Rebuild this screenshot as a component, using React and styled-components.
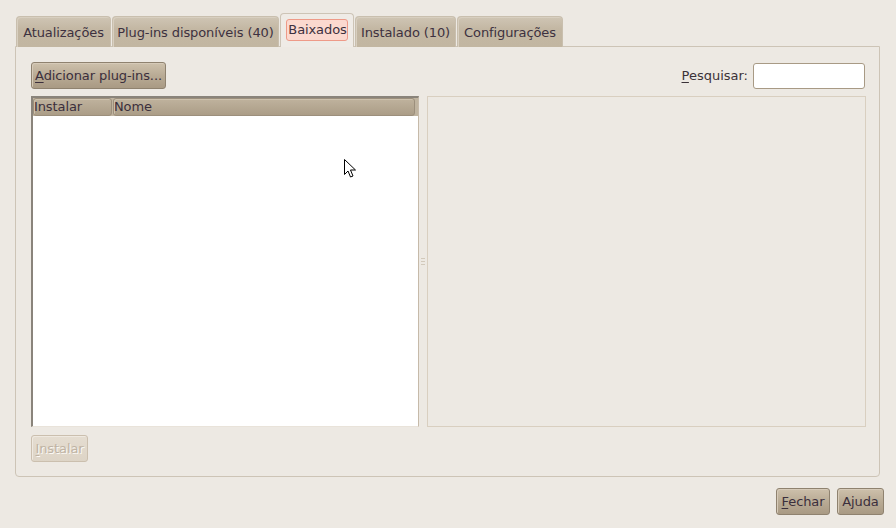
import React from "react";
import styled, { createGlobalStyle } from "styled-components";

const Global = createGlobalStyle`
  html, body { margin: 0; padding: 0; background: #EDE9E3; }
  body { font-family: "DejaVu Sans", "Liberation Sans", sans-serif; font-size: 13px; color: #3b3238; }
  #root { width: 896px; height: 528px; }
`;

const Window = styled.div`
  position: relative;
  width: 896px;
  height: 528px;
  box-sizing: border-box;
  padding-top: 13px;
  display: flex;
  flex-direction: column;
  overflow: hidden;
`;

const TabRow = styled.div`
  display: flex;
  align-items: flex-end;
  gap: 1px;
  padding-left: 16px;
  height: 34px;
  position: relative;
  z-index: 1;
`;

const Tab = styled.div`
  box-sizing: border-box;
  height: ${(p) => (p.$active ? 34 : 31)}px;
  width: ${(p) => p.$w}px;
  display: flex;
  align-items: center;
  justify-content: center;
  padding-top: ${(p) => (p.$active ? 0 : 1)}px;
  border-radius: 4px 4px 0 0;
  border: 1px solid ${(p) => (p.$active ? "#cdc4b6" : "#c9bfae")};
  border-bottom: none;
  background: ${(p) =>
    p.$active ? "#EFEBE6" : "linear-gradient(#cfc5b4, #c3b7a3 40%, #c2b6a1)"};
  box-shadow: ${(p) => (p.$active ? "none" : "inset 1px 1px 0 #d8cfc0")};
  white-space: nowrap;
  color: #3d3140;
  letter-spacing: -0.1px;
`;

const FocusLabel = styled.span`
  border: 1px solid #ee9a88;
  background: #fbd9cf;
  border-radius: 3px;
  padding: 2px 0 3px 1px;
  margin-top: -2px;
`;

const Notebook = styled.div`
  margin: -1px 16px 0 15px;
  height: 431px;
  box-sizing: border-box;
  border: 1px solid #cdc4b6;
  border-radius: 0 0 4px 4px;
  padding: 15px 14px 14px 15px;
  display: flex;
  flex-direction: column;
`;

const TopBar = styled.div`
  display: flex;
  align-items: center;
  justify-content: space-between;
  height: 27px;
  margin-bottom: 7px;
`;

const Button = styled.button`
  box-sizing: border-box;
  height: 27px;
  width: ${(p) => p.$w}px;
  padding: 0 2px;
  font: inherit;
  color: ${(p) => (p.disabled ? "#bfb3a3" : "#3b2f3c")};
  text-shadow: ${(p) => (p.disabled ? "1px 1px 0 #fbf9f6" : "none")};
  border-radius: 3px;
  border: 1px solid ${(p) => (p.disabled ? "#cbbfae" : "#8f826f")};
  background: ${(p) =>
    p.disabled
      ? "linear-gradient(#e5ddd1, #ddd4c6)"
      : "linear-gradient(#cdc0ab, #b9ab95 50%, #a99a84)"};
  box-shadow: inset 1px 1px 0 ${(p) => (p.disabled ? "#efe9e0" : "#d6cab8")};
  cursor: default;
  white-space: nowrap;
  letter-spacing: -0.1px;
`;

const Mn = styled.span`
  text-decoration: underline;
  text-underline-offset: 2px;
`;

const Search = styled.label`
  display: flex;
  align-items: center;
  gap: 5px;
  color: #3b3238;
`;

const Entry = styled.input`
  box-sizing: border-box;
  width: 112px;
  height: 26px;
  border: 1px solid #a89a85;
  border-radius: 3px;
  background: #fff;
  outline: none;
`;

const Panes = styled.div`
  display: flex;
  height: 332px;
`;

const Tree = styled.div`
  box-sizing: border-box;
  width: 388px;
  border-top: 2px solid #8a847b;
  border-left: 2px solid #8a847b;
  border-right: 1px solid #c6baa9;
  border-bottom: 1px solid #e9e3da;
  background: #fff;
  display: flex;
  flex-direction: column;
`;

const Header = styled.div`
  display: flex;
  height: 18px;
  background: #c0b4a0;
  padding-right: 2px;
`;

const HeaderCell = styled.div`
  box-sizing: border-box;
  ${(p) => (p.$w ? `width: ${p.$w}px;` : "flex: 1;")}
  height: 18px;
  line-height: 16px;
  border: 1px solid #9c8f7c;
  border-radius: 3px;
  background: linear-gradient(#bfb29d, #ab9d87);
  box-shadow: inset 1px 1px 0 #cdc1ad;
  color: #3b2f3c;
  margin-right: 1px;
  letter-spacing: -0.1px;
`;

const Handle = styled.div`
  width: 8px;
  display: flex;
  flex-direction: column;
  align-items: center;
  justify-content: center;
  gap: 2px;
`;

const Dot = styled.div`
  width: 4px;
  height: 1px;
  background: #d2c9bb;
`;

const Detail = styled.div`
  flex: 1;
  box-sizing: border-box;
  border: 1px solid #d9cfc0;
  margin-right: -1px;
`;

const BottomBar = styled.div`
  margin-top: 8px;
`;

const Actions = styled.div`
  display: flex;
  justify-content: flex-end;
  gap: 7px;
  padding: 11px 12px 0 0;
`;

const Cursor = styled.svg`
  position: absolute;
  left: 344px;
  top: 159px;
`;

export default function App() {
  return (
    <>
      <Global />
      <Window>
        <TabRow>
          <Tab $w={95}>Atualizações</Tab>
          <Tab $w={167}>Plug-ins disponíveis (40)</Tab>
          <Tab $w={74} $active>
            <FocusLabel>Baixados</FocusLabel>
          </Tab>
          <Tab $w={101}>Instalado (10)</Tab>
          <Tab $w={106}>Configurações</Tab>
        </TabRow>
        <Notebook>
          <TopBar>
            <Button $w={135}>
              <Mn>A</Mn>dicionar plug-ins...
            </Button>
            <Search>
              <span>
                <Mn>P</Mn>esquisar:
              </span>
              <Entry type="text" />
            </Search>
          </TopBar>
          <Panes>
            <Tree>
              <Header>
                <HeaderCell $w={79}>Instalar</HeaderCell>
                <HeaderCell>Nome</HeaderCell>
              </Header>
            </Tree>
            <Handle>
              <Dot />
              <Dot />
              <Dot />
            </Handle>
            <Detail />
          </Panes>
          <BottomBar>
            <Button disabled $w={57}>
              <Mn>I</Mn>nstalar
            </Button>
          </BottomBar>
        </Notebook>
        <Actions>
          <Button $w={54}>
            <Mn>F</Mn>echar
          </Button>
          <Button $w={47}>Ajuda</Button>
        </Actions>
        <Cursor width="14" height="20" viewBox="0 0 14 20">
          <path
            d="M0.5 0.5 L0.5 15.5 L4 12 L6.5 18 L9 17 L6.5 11 L11.5 11 Z"
            fill="#fff"
            stroke="#000"
            strokeWidth="1"
          />
        </Cursor>
      </Window>
    </>
  );
}
